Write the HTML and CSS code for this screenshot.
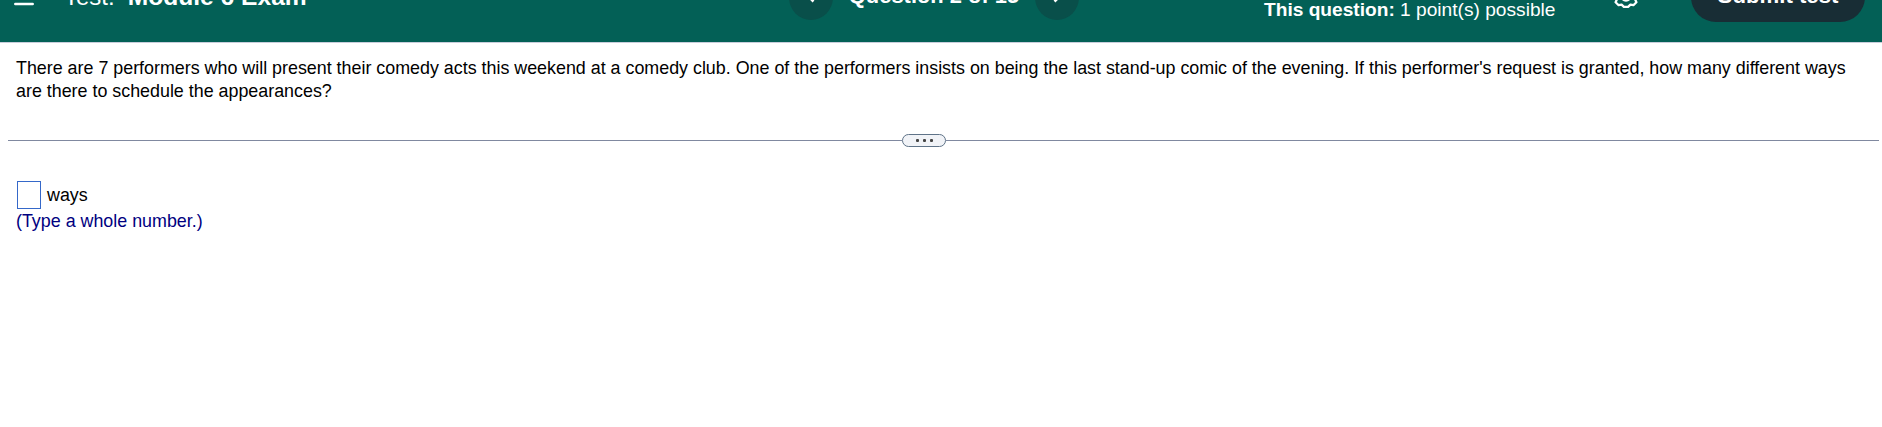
FILE: index.html
```html
<!DOCTYPE html>
<html lang="en">
<head>
<meta charset="utf-8">
<title>Module 6 Exam</title>
<link rel="stylesheet" href="styles.css">
</head>
<body>
<header class="topbar">
  <div class="bar">
    <svg class="menu" width="20" height="18" viewBox="0 0 20 18"><path d="M1.3 1.3H18.7M1.3 8H18.7M1.3 16H18.7" stroke="#fff" stroke-width="2.5" stroke-linecap="round"/></svg>
    <div class="title"><span>Test:</span><b>Module 6 Exam</b></div>
    <nav class="pager">
      <span class="round"><svg class="chevron" width="12" height="14" viewBox="0 0 12 14"><path d="M8.5 1.5L3 7L8.5 12.5" fill="none" stroke="#fff" stroke-width="2.6"/></svg></span>
      <span class="count">Question 2 of 15</span>
      <span class="round"><svg class="chevron" width="12" height="14" viewBox="0 0 12 14"><path d="M3.5 1.5L9 7L3.5 12.5" fill="none" stroke="#fff" stroke-width="2.6"/></svg></span>
    </nav>
    <div class="points"><b>This question:</b> 1 point(s) possible</div>
    <svg class="gear" width="24" height="24" viewBox="-12 -12 24 24" fill="none" stroke="#fff" stroke-width="2.3" stroke-linejoin="round"><path d="M10.8 -2.1V2.1L9.2 3.6L10.4 6.2L7.4 9.2L4.4 8.6L2.1 10.8H-2.1L-4.4 8.6L-7.4 9.2L-10.4 6.2L-9.2 3.6L-10.8 2.1V-2.1L-9.2 -3.6L-10.4 -6.2L-7.4 -9.2L-4.4 -8.6L-2.1 -10.8H2.1L4.4 -8.6L7.4 -9.2L10.4 -6.2L9.2 -3.6Z"/><circle r="4.6"/></svg>
    <button class="submit">Submit test</button>
  </div>
</header>
<main class="content">
  <p class="question">There are 7 performers who will present their comedy acts this weekend at a comedy club. One of the performers insists on being the last stand-up comic of the evening. If this performer's request is granted, how many different ways<br>are there to schedule the appearances?</p>
  <div class="divider"><span class="handle"><i></i><i></i><i></i></span></div>
  <section class="answer">
    <label class="entry"><input class="box" type="text">ways</label>
    <p class="hint">(Type a whole number.)</p>
  </section>
</main>
</body>
</html>
```
FILE: styles.css
```css
* { box-sizing: border-box; }
body {
  margin: 0;
  background: #fff;
  color: #000;
  font: 17.88px/23px "Liberation Sans", Arial, sans-serif;
}
p { margin: 0; }
.topbar {
  height: 43px;
  display: flex;
  align-items: flex-end;
  overflow: hidden;
  background: #036056;
  border-bottom: 1px solid #c9cddb;
}
.bar {
  flex: 1;
  height: 90px;
  display: grid;
  grid-template-columns: 50px 725px 475px 350px 77px 174px;
  align-items: center;
  padding-left: 14px;
  color: #fff;
}
.menu { margin-bottom: 1px; }
.title { display: flex; gap: 13px; padding-bottom: 2px; font-size: 24px; white-space: nowrap; }
.title b { font-size: 24.6px; }
.pager { display: flex; align-items: center; width: 290px; }
.round {
  width: 44px;
  height: 45px;
  border-radius: 50%;
  background: #094f4a;
  display: flex;
  align-items: center;
  justify-content: center;
}
.chevron { margin-bottom: 2px; }
.count {
  flex: 1;
  padding-bottom: 4px;
  text-align: center;
  font-size: 21.9px;
  font-weight: bold;
  white-space: nowrap;
}
.points { font-size: 19.15px; padding-top: 24px; white-space: nowrap; }
.gear { margin-bottom: 2px; }
.submit {
  height: 50px;
  padding: 0 0 3px;
  border: 0;
  border-radius: 25px;
  background: #182d35;
  color: #fff;
  font: bold 22.2px "Liberation Sans", Arial, sans-serif;
}
.content { padding: 14px 3px 0 8px; }
.question { padding: 0 8px; white-space: nowrap; }
.divider {
  height: 13px;
  margin-top: 31px;
  display: flex;
  align-items: center;
}
.divider::before, .divider::after { content: ""; height: 1px; background: #8089a0; }
.divider::before { width: 894px; }
.divider::after { flex: 1; }
.handle {
  width: 44px;
  height: 13px;
  border: 1px solid #5f7388;
  border-radius: 7px;
  background: #f1f3f7;
  display: flex;
  align-items: center;
  justify-content: center;
  gap: 4px;
}
.handle i { width: 3px; height: 3px; border-radius: 1px; background: #444; }
.answer { padding: 34px 8px 0; }
.entry { display: flex; align-items: center; gap: 6px; padding-left: 1px; }
.box { width: 24px; height: 28px; padding: 0; border: 1px solid #3568c9; background: #fff; }
.hint { margin-top: 1px; color: #000080; }
```
